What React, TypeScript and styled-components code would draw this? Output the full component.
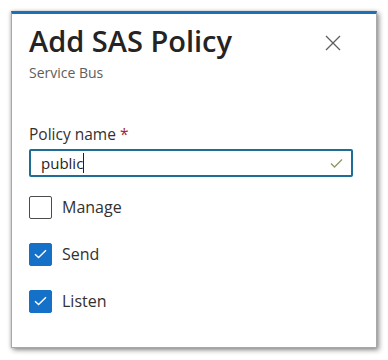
import styled, { createGlobalStyle } from "styled-components"

const GlobalStyle = createGlobalStyle`
	html, body {
		margin: 0;
		padding: 0;
		background: #ffffff;
	}
	body {
		font-family: "Open Sans", "Noto Sans", "Liberation Sans", sans-serif;
		color: #323130;
	}
`

const Page = styled.div`
	width: 388px;
	height: 360px;
	padding: 11px;
	box-sizing: border-box;
`

const Panel = styled.div`
	width: 366px;
	height: 337px;
	box-sizing: border-box;
	background: #ffffff;
	border: 1px solid #a8a8a8;
	border-top: 3px solid #1f6fb5;
	box-shadow: 2px 2px 5px rgba(0, 0, 0, 0.45), -1px 0 3px rgba(0, 0, 0, 0.15);
	padding: 10px 23px 0 17px;
`

const Header = styled.div`
	display: flex;
	justify-content: space-between;
	align-items: flex-start;
	padding-right: 11px;
`

const Title = styled.h1`
	margin: 0;
	font-size: 29px;
	font-weight: 600;
	line-height: 34px;
	color: #252423;
`

const Subtitle = styled.div`
	font-size: 14px;
	line-height: 18px;
	color: #605e5c;
	margin-top: 6px;
`

const CloseButton = styled.button`
	border: none;
	background: none;
	padding: 0;
	margin-top: 10px;
	width: 18px;
	height: 18px;
	display: flex;
	align-items: center;
	justify-content: center;
	cursor: pointer;
`

const Form = styled.div`
	margin-top: 42px;
	display: flex;
	flex-direction: column;
`

const Label = styled.label`
	font-size: 15.5px;
	line-height: 20px;
	color: #323130;
`

const Required = styled.span`
	color: #a4262c;
	margin-left: 4px;
`

const InputWrap = styled.div`
	position: relative;
	margin-top: 5px;
	width: 324px;
	height: 28px;
	box-sizing: border-box;
	border: 2px solid #1d6e95;
	border-radius: 2px;
	display: flex;
	align-items: center;
	padding: 0 8px 0 10px;
`

const Value = styled.span`
	font-size: 15px;
	color: #252423;
	border-right: 1.5px solid #201f1e;
	line-height: 20px;
`

const Check = styled.svg`
	position: absolute;
	right: 8px;
	top: 7px;
`

const Options = styled.div`
	margin-top: 19px;
	display: flex;
	flex-direction: column;
	gap: 25px;
`

const Option = styled.label`
	display: flex;
	align-items: center;
	gap: 10px;
	font-size: 16px;
	color: #323130;
	height: 22px;
`

const Box = styled.span<{ $checked: boolean }>`
	width: 23px;
	height: 23px;
	box-sizing: border-box;
	border-radius: 2px;
	border: 1.5px solid ${(p) => (p.$checked ? "#1570c8" : "#4d4c4b")};
	background: ${(p) => (p.$checked ? "#1570c8" : "#ffffff")};
	display: flex;
	align-items: center;
	justify-content: center;
	flex-shrink: 0;
`

const CheckBox = ({ checked }: { checked: boolean }) => (
	<Box $checked={checked}>
		{checked && (
			<svg width="13" height="10" viewBox="0 0 13 10">
				<path d="M1 5.2 L4.6 8.6 L12 1.2" fill="none" stroke="#ffffff" strokeWidth="1.4" />
			</svg>
		)}
	</Box>
)

const options = [
	{ label: "Manage", checked: false },
	{ label: "Send", checked: true },
	{ label: "Listen", checked: true },
]

const App = () => {
	return (
		<Page>
			<GlobalStyle />
			<Panel>
				<Header>
					<div>
						<Title>Add SAS Policy</Title>
						<Subtitle>Service Bus</Subtitle>
					</div>
					<CloseButton aria-label="Close">
						<svg width="16" height="16" viewBox="0 0 16 16">
							<path d="M1 1 L15 15 M15 1 L1 15" stroke="#605e5c" strokeWidth="1.3" />
						</svg>
					</CloseButton>
				</Header>
				<Form>
					<Label>
						Policy name<Required>*</Required>
					</Label>
					<InputWrap>
						<Value>public</Value>
						<Check width="13" height="10" viewBox="0 0 13 10">
							<path d="M1 5.5 L4.5 9 L12 1.5" fill="none" stroke="#8b9b60" strokeWidth="1.3" />
						</Check>
					</InputWrap>
					<Options>
						{options.map((o) => (
							<Option key={o.label}>
								<CheckBox checked={o.checked} />
								{o.label}
							</Option>
						))}
					</Options>
				</Form>
			</Panel>
		</Page>
	)
}

export default App
